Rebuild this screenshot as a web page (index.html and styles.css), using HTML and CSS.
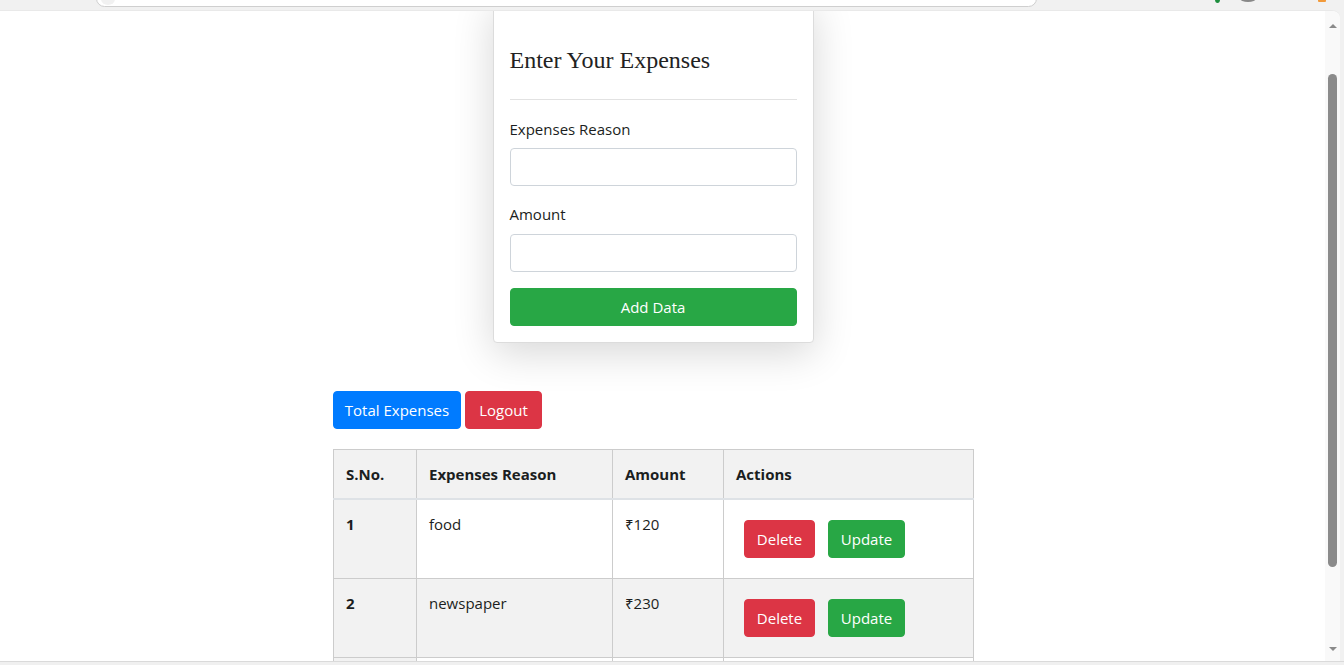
FILE: index.html
```html
<!DOCTYPE html>
<html lang="en">
<head>
<meta charset="utf-8">
<title>Expenses</title>
<link rel="stylesheet" href="styles.css">
</head>
<body>
<div class="window">
  <div class="chrome">
    <div class="address"><span class="address-icon"></span></div>
    <span class="ext ext-green"></span>
    <span class="ext ext-grey"></span>
    <span class="ext ext-orange"></span>
  </div>
  <div class="viewport">
    <main class="page">
      <section class="card">
        <h2 class="card-title">Enter Your Expenses</h2>
        <hr class="divider">
        <div class="form-group">
          <label class="form-label" for="reason">Expenses Reason</label>
          <input class="form-input" id="reason" type="text">
        </div>
        <div class="form-group">
          <label class="form-label" for="amount">Amount</label>
          <input class="form-input" id="amount" type="text">
        </div>
        <button class="btn btn-success btn-block">Add Data</button>
      </section>

      <div class="list">
        <div class="toolbar">
          <button class="btn btn-primary">Total Expenses</button>
          <button class="btn btn-danger">Logout</button>
        </div>
        <table class="table">
          <colgroup>
            <col class="col-sno">
            <col class="col-reason">
            <col class="col-amount">
            <col class="col-actions">
          </colgroup>
          <thead>
            <tr>
              <th>S.No.</th>
              <th>Expenses Reason</th>
              <th>Amount</th>
              <th>Actions</th>
            </tr>
          </thead>
          <tbody>
            <tr>
              <th>1</th>
              <td>food</td>
              <td>₹120</td>
              <td><div class="actions"><button class="btn btn-danger">Delete</button><button class="btn btn-success">Update</button></div></td>
            </tr>
            <tr class="striped">
              <th>2</th>
              <td>newspaper</td>
              <td>₹230</td>
              <td><div class="actions"><button class="btn btn-danger">Delete</button><button class="btn btn-success">Update</button></div></td>
            </tr>
            <tr class="row-partial">
              <th></th>
              <td></td>
              <td></td>
              <td></td>
            </tr>
          </tbody>
        </table>
      </div>
    </main>
    <div class="scrollbar">
      <span class="arrow arrow-up"></span>
      <div class="thumb"></div>
      <span class="arrow arrow-down"></span>
    </div>
  </div>
  <div class="bottom-edge"></div>
</div>
</body>
</html>
```

FILE: styles.css
```css
* { box-sizing: border-box; }

html, body {
  margin: 0;
  height: 665px;
  overflow: hidden;
  background: #f1f1f1;
}

body {
  font-family: "Open Sans", "Noto Sans", "DejaVu Sans", sans-serif;
  font-size: 15px;
  line-height: 24px;
  color: #1b1e21;
}

.window {
  display: flex;
  flex-direction: column;
  height: 665px;
}

/* browser chrome strip */
.chrome {
  height: 10px;
  flex: none;
  position: relative;
  background: #f1f1f1;
}
.address {
  position: absolute;
  left: 96px;
  top: -10px;
  width: 941px;
  height: 17px;
  background: #fff;
  border: 1px solid #cfcfcf;
  border-radius: 9px;
}
.address-icon {
  position: absolute;
  left: 4px;
  top: 2px;
  width: 14px;
  height: 12px;
  border-radius: 50%;
  background: #f1f1f1;
}
.ext {
  position: absolute;
  top: -4px;
  border-radius: 50%;
}
.ext-green { left: 1215px; width: 5px; height: 7px; background: #1e8e3e; }
.ext-grey { left: 1240px; width: 16px; height: 7px; background: #888; top: -5px; }
.ext-orange { left: 1318px; width: 8px; height: 6px; background: #f29a3b; border-radius: 1px; }

.viewport {
  flex: 1;
  display: flex;
  min-height: 0;
  background: #fff;
  margin-right: 4px;
  border-top-right-radius: 8px;
  overflow: hidden;
  border-top: 1px solid #e9e9e9;
}

.page {
  flex: 1;
  min-width: 0;
  display: flex;
  flex-direction: column;
  align-items: center;
  padding-right: 19px;
  overflow: hidden;
}

/* card */
.card {
  width: 321px;
  margin-top: -12px;
  padding: 16px;
  background: #fff;
  border: 1px solid #dcdcdc;
  border-radius: 4px;
  box-shadow: 0 10px 40px rgba(0, 0, 0, 0.16);
}
.card-title {
  margin: 30px 0 0;
  font-family: "Liberation Serif", "Times New Roman", serif;
  font-weight: normal;
  font-size: 24px;
  line-height: 29px;
  color: #222;
}
.divider {
  margin: 24px 0 17px;
  border: 0;
  border-top: 1px solid #e2e2e2;
}
.form-group { margin-bottom: 16px; }
.form-label {
  display: block;
  margin-bottom: 7px;
}
.form-group + .form-group .form-label { margin-bottom: 8px; }
.form-input {
  display: block;
  width: 100%;
  height: 38px;
  border: 1px solid #ced4da;
  border-radius: 4px;
  background: #fff;
  font: inherit;
  padding: 6px 12px;
}

/* buttons */
.btn {
  display: inline-block;
  height: 38px;
  padding: 6px 0;
  border: 1px solid transparent;
  border-radius: 4px;
  font: inherit;
  color: #fff;
  white-space: nowrap;
  text-align: center;
  cursor: pointer;
}
.btn-block { display: block; width: 100%; }
.btn-success { background: #28a745; border-color: #28a745; }
.btn-primary { background: #007bff; border-color: #007bff; }
.btn-danger { background: #dc3545; border-color: #dc3545; }

.list {
  width: 640px;
  margin-top: 48px;
}
.toolbar {
  display: flex;
  gap: 4px;
  margin-bottom: 20px;
}
.toolbar .btn-primary { width: 128px; }
.toolbar .btn-danger { width: 77px; }

/* table */
.table {
  width: 640px;
  border-collapse: collapse;
  table-layout: fixed;
}
.col-sno { width: 83px; }
.col-reason { width: 196px; }
.col-amount { width: 111px; }
.col-actions { width: 250px; }

.table th,
.table td {
  border: 1px solid #cccccc;
  padding: 12px;
  text-align: left;
  vertical-align: top;
}
.table th { font-weight: bold; background: #f2f2f2; }
.table td { background: #fff; }
.table thead th { border-bottom: 2px solid #dee2e6; }
.table tr.striped td { background: #f2f2f2; }
.table tr.row-partial th,
.table tr.row-partial td { height: 48px; }

.actions {
  display: flex;
  gap: 13px;
  padding: 8px 0 8px 8px;
}
.actions .btn-danger { width: 71px; }
.actions .btn-success { width: 77px; }

/* fake scrollbar */
.scrollbar {
  width: 15px;
  flex: none;
  display: flex;
  flex-direction: column;
  align-items: center;
  background: #f9f9f9;
}
.arrow {
  width: 0;
  height: 0;
  border-left: 4px solid transparent;
  border-right: 4px solid transparent;
}
.arrow-up {
  margin-top: 13px;
  border-bottom: 4px solid #8a8a8a;
}
.arrow-down {
  margin-top: auto;
  margin-bottom: 10px;
  border-top: 4px solid #8a8a8a;
}
.thumb {
  width: 9px;
  height: 493px;
  margin-top: 46px;
  background: #8b8b8b;
  border-radius: 5px;
}

.bottom-edge {
  height: 4px;
  flex: none;
  border-top: 1px solid #dadada;
  background: #f0f0f0;
}
```
